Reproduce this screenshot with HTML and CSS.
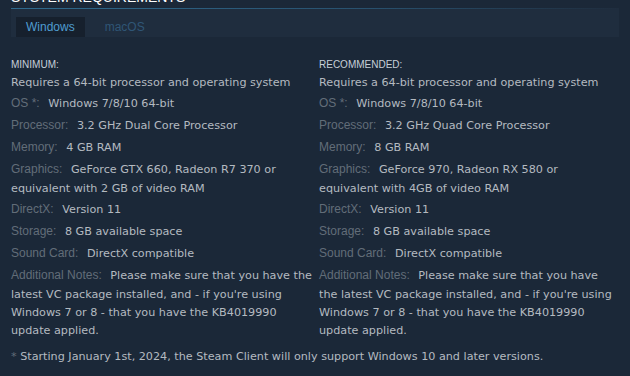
FILE: index.html
```html
<!DOCTYPE html>
<html lang="en">
<head>
    <meta charset="UTF-8">
    <meta name="viewport" content="width=device-width, initial-scale=1.0">
    <title>System Requirements</title>
    <link rel="stylesheet" href="styles.css">
</head>
<body>
    <div id="sysreq">
        <h2 class="heading">System Requirements</h2>
        <div class="tabs">
            <div class="tab active">Windows</div>
            <div class="tab">macOS</div>
        </div>
        <div class="cols">
            <div class="col left">
                <div class="colhead">MINIMUM:</div>
                <ul>
                    <li>Requires a 64-bit processor and operating system</li>
                    <li><span class="lbl">OS *:</span> Windows 7/8/10 64-bit</li>
                    <li><span class="lbl">Processor:</span> 3.2 GHz Dual Core Processor</li>
                    <li><span class="lbl">Memory:</span> 4 GB RAM</li>
                    <li><span class="lbl">Graphics:</span> GeForce GTX 660, Radeon R7 370 or equivalent with 2 GB of video RAM</li>
                    <li><span class="lbl">DirectX:</span> Version 11</li>
                    <li><span class="lbl">Storage:</span> 8 GB available space</li>
                    <li><span class="lbl">Sound Card:</span> DirectX compatible</li>
                    <li><span class="lbl">Additional Notes:</span> Please make sure that you have the latest VC package installed, and - if you're using Windows 7 or 8 - that you have the KB4019990 update applied.</li>
                </ul>
            </div>
            <div class="col right">
                <div class="colhead">RECOMMENDED:</div>
                <ul>
                    <li>Requires a 64-bit processor and operating system</li>
                    <li><span class="lbl">OS *:</span> Windows 7/8/10 64-bit</li>
                    <li><span class="lbl">Processor:</span> 3.2 GHz Quad Core Processor</li>
                    <li><span class="lbl">Memory:</span> 8 GB RAM</li>
                    <li><span class="lbl">Graphics:</span> GeForce 970, Radeon RX 580 or equivalent with 4GB of video RAM</li>
                    <li><span class="lbl">DirectX:</span> Version 11</li>
                    <li><span class="lbl">Storage:</span> 8 GB available space</li>
                    <li><span class="lbl">Sound Card:</span> DirectX compatible</li>
                    <li><span class="lbl">Additional Notes:</span> Please make sure that you have the latest VC package installed, and - if you're using Windows 7 or 8 - that you have the KB4019990 update applied.</li>
                </ul>
            </div>
        </div>
        <div class="note"><span class="star">*</span> Starting January 1st, 2024, the Steam Client will only support Windows 10 and later versions.</div>
    </div>
</body>
</html>
```

FILE: styles.css
```css
* {
    margin: 0;
    padding: 0;
    box-sizing: border-box;
}
html,body {
    width: 100%;
    height: 100%;
    background-color: #1b2838;
    overflow: hidden;
}
#sysreq {
    padding: 0 11px;
    font-family: "DejaVu Sans", sans-serif;
    font-size: 11.2px;
    color: #b4bac0;
}
.heading {
    font-family: "Liberation Sans", Arial, sans-serif;
    font-size: 14px;
    font-weight: 400;
    text-transform: uppercase;
    color: #fff;
    line-height: 18px;
    height: 20px;
    margin-top: -12px;
}
.tabs {
    display: flex;
    height: 29px;
    padding: 8px 0 0 5px;
    gap: 10px;
    border-top: 1px solid;
    border-image: linear-gradient(to right, #2f6a8e 0%, #28506d 60%, rgba(40, 80, 109, 0) 100%) 1;
    background-color: #1f2d3e;
    font-family: "Liberation Sans", Arial, sans-serif;
    font-size: 12px;
}
.tab {
    padding: 0 10px;
    line-height: 20px;
    color: #2f5676;
}
.tab.active {
    background-color: #16202d;
    color: #4f9dd0;
}
.cols {
    display: flex;
    gap: 6px;
    margin-top: 22px;
}
.col {
    flex-shrink: 0;
}
.col.left {
    width: 302px;
}
.col.right {
    width: 300px;
}
.colhead {
    font-family: "Liberation Sans", Arial, sans-serif;
    font-size: 10px;
    line-height: 12px;
    color: #c6cfd8;
    margin-bottom: 3px;
}
ul {
    list-style: none;
}
li {
    line-height: 18px;
    margin-bottom: 2px;
}
.lbl {
    display: inline-block;
    font-family: "Liberation Sans", Arial, sans-serif;
    font-size: 12px;
    line-height: 18px;
    padding-bottom: 2px;
    color: #626d78;
    margin-right: 5px;
}
.note {
    margin-top: 6px;
    line-height: 18px;
}
.star {
    color: #626d78;
}
```
